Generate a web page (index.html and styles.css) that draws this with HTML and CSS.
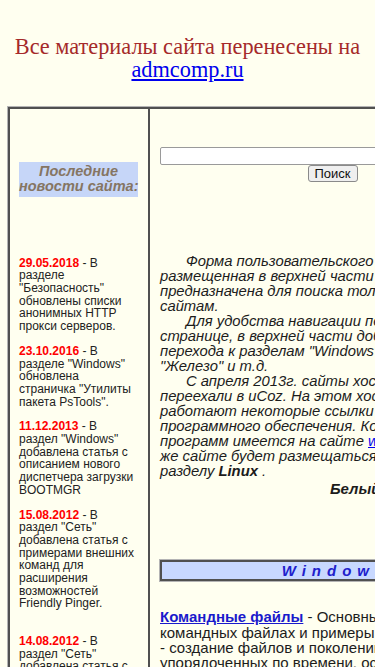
FILE: index.html
```html
<!DOCTYPE html>
<html lang="ru">
<head>
    <meta charset="UTF-8">
    <meta name="viewport" content="width=device-width, initial-scale=1.0">
    <title>Сайт Белого Ю.И.</title>
    <link rel="stylesheet" href="styles.css">
</head>
<body>
    <div class="notice">Все материалы сайта перенесены на<br><a href="#">admcomp.ru</a></div>
    <div class="layout">
        <div class="side">
            <div class="side-title">Последние<br>новости сайта:</div>
            <p class="news first"><span class="date">29.05.2018</span> - В разделе "Безопасность" обновлены списки анонимных HTTP прокси серверов.</p>
            <p class="news"><span class="date">23.10.2016</span> - В разделе "Windows" обновлена страничка "Утилиты пакета PsTools".</p>
            <p class="news"><span class="date">11.12.2013</span> - В раздел "Windows" добавлена статья с описанием нового диспетчера загрузки BOOTMGR</p>
            <p class="news spaced"><span class="date">15.08.2012</span> - В раздел "Сеть" добавлена статья с примерами внешних команд для расширения возможностей Friendly Pinger.</p>
            <p class="news"><span class="date">14.08.2012</span> - В раздел "Сеть" добавлена статья с описанием программы.</p>
        </div>
        <div class="main">
            <form class="search" onsubmit="return false">
                <input type="text" class="search-input">
                <button type="submit" class="search-btn">Поиск</button>
            </form>
            <div class="intro">
                <p>Форма пользовательского поиска,<br>размещенная в верхней части страницы,<br>предназначена для поиска только по<br>сайтам.</p>
                <p>Для удобства навигации по сайту, на<br>странице, в верхней части добавлены ссылки<br>перехода к разделам "Windows", "Сеть",<br>"Железо" и т.д.</p>
                <p>С апреля 2013г. сайты хостинга narod.ru<br>переехали в uCoz. На этом хостинге не<br>работают некоторые ссылки на загрузку<br>программного обеспечения. Копия всех<br>программ имеется на сайте <a href="#">white55.ru</a>. На<br>же сайте будет размещаться информация по<br>разделу <b>Linux</b> .</p>
            </div>
            <div class="sign">Белый Юрий Иванович</div>
            <div class="section-bar">Windows</div>
            <p class="topic"><a href="#">Командные файлы</a> - Основные сведения о<br>командных файлах и примеры их<br>- создание файлов и поколений архивов,<br>упорядоченных по времени, остановка</p>
        </div>
    </div>
</body>
</html>
```

FILE: styles.css
```css
html, body {
    margin: 0;
    padding: 0;
}
body {
    background-color: #fffff0;
    font-family: "Liberation Sans", Arial, sans-serif;
    color: #222;
    padding: 8px;
}
a {
    color: #0000ee;
}
.notice {
    font-family: "Liberation Serif", "Times New Roman", serif;
    font-size: 22.3px;
    line-height: 23.3px;
    color: #a52a2a;
    text-align: center;
    margin: 27px 0 25.4px;
}
.layout {
    display: flex;
    width: 509px;
    box-sizing: border-box;
    border: 2px solid #505050;
    box-shadow: 0 0 0 1px #b4b4b4;
}
.side {
    flex: none;
    width: 140px;
    box-sizing: border-box;
    border-right: 2px solid #505050;
    padding: 52.7px 10px 0 9px;
}
.side-title {
    background-color: #c6d6f8;
    color: #857563;
    font-size: 14.5px;
    font-weight: bold;
    font-style: italic;
    line-height: 15.7px;
    text-align: center;
    white-space: nowrap;
    padding: 2px 0;
}
.news {
    font-size: 12px;
    line-height: 12.66px;
    margin: 0 0 12.3px;
}
.news.first {
    margin-top: 59.6px;
}
.news.spaced {
    margin-bottom: 25px;
}
.date {
    color: #f00;
    font-weight: bold;
}
.main {
    flex: 1;
    min-width: 0;
    padding: 38px 10px 0;
}
.search {
    display: flex;
    flex-direction: column;
    align-items: center;
    margin: 0;
}
.search-input {
    width: 100%;
    height: 17.6px;
    box-sizing: border-box;
    margin: 0;
    padding: 0 2px;
    border: 1px solid #9a9a9a;
    border-radius: 2px;
    background-color: #fff;
}
.search-btn {
    width: 50px;
    height: 17.4px;
    box-sizing: border-box;
    margin: 0;
    padding: 0;
    font-family: "Liberation Sans", Arial, sans-serif;
    font-size: 13px;
    color: #111;
    border: 1px solid #8a8a8a;
    border-radius: 3px;
    background-color: #efefef;
}
.intro {
    margin-top: 72.5px;
    font-size: 14.8px;
    font-style: italic;
    line-height: 15px;
    color: #1c1c1c;
}
.intro p {
    margin: 0;
    text-indent: 26px;
}
.sign {
    margin-top: 1.6px;
    text-align: right;
    font-size: 15px;
    font-style: italic;
    font-weight: bold;
    line-height: 15px;
    color: #1c1c1c;
}
.section-bar {
    margin-top: 63.5px;
    border: 2px solid #505050;
    box-shadow: 0 0 0 1px #b4b4b4;
    background-color: #c8d8ff;
    color: #2020cc;
    font-size: 15px;
    font-style: italic;
    font-weight: bold;
    line-height: 17.4px;
    letter-spacing: 6px;
    padding-left: 6px;
    text-align: center;
}
.topic {
    margin: 28.3px 0 0;
    font-size: 15px;
    line-height: 15.3px;
    color: #1c1c1c;
}
.topic a {
    color: #1a1acc;
    font-weight: bold;
}
```
